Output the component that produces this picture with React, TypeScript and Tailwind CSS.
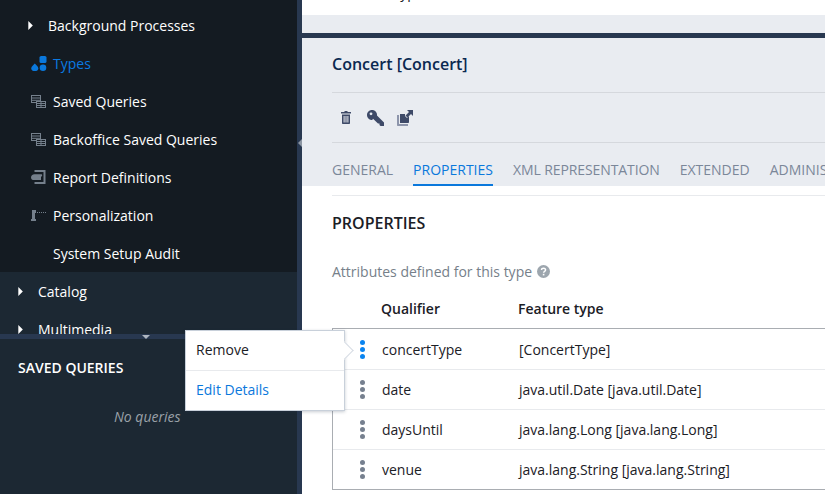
import React from "react";

const font = { fontFamily: '"Open Sans", sans-serif' };

function Caret({ className = "" }: { className?: string }) {
  return (
    <svg width="5" height="9" viewBox="0 0 5 9" className={className}>
      <path d="M0.3 0L4.8 4.5L0.3 9Z" fill="#ffffff" />
    </svg>
  );
}

function TypesIcon() {
  return (
    <svg width="16" height="15" viewBox="0 0 16 15">
      <rect x="8.5" y="0" width="7" height="7" rx="1.6" fill="#0a78dc" />
      <path d="M3.8 7.5C4.8 9 7.4 10.4 7.4 12.4C7.4 14 5.8 15 3.8 15C1.8 15 0.2 14 0.2 12.4C0.2 10.4 2.8 9 3.8 7.5Z" fill="#0a78dc" />
      <circle cx="12" cy="11.7" r="3.3" fill="#0a78dc" />
    </svg>
  );
}

function QueryIcon() {
  return (
    <svg width="15" height="13" viewBox="0 0 15 13" fill="none" stroke="#75808c" strokeWidth="1">
      <rect x="0.5" y="0.5" width="9" height="7" />
      <path d="M0.5 3H9.5M0.5 5.3H9.5" />
      <rect x="5.5" y="6.5" width="9" height="6" fill="#141b22" />
      <path d="M5.5 8.5H14.5M5.5 10.5H14.5M10 6.5V12.5" />
    </svg>
  );
}

function ReportIcon() {
  return (
    <svg width="15" height="14" viewBox="0 0 15 14">
      <path d="M3.5 0H14.5V14H3.5V12H12.5V2H3.5Z" fill="#75808c" />
      <path d="M3.5 4.2H10.5C11.4 4.2 11.4 6.6 10.5 6.6H10V10H3.5C1 10 0 9 0 7.4C0 5.6 1.4 4.2 3.5 4.2Z" fill="#75808c" />
    </svg>
  );
}

function PersonalizationIcon() {
  return (
    <svg width="15" height="11" viewBox="0 0 15 11">
      <path d="M1 0H5V3H4V9H5V11H0V9H1Z" fill="#75808c" />
      <path d="M6 2.5H15" stroke="#75808c" strokeWidth="1" strokeDasharray="1 1" />
    </svg>
  );
}

function NavRow({ icon, label, active }: { icon?: React.ReactNode; label: string; active?: boolean }) {
  return (
    <div className="flex h-[38px] items-center pl-[31px]">
      <div className="flex w-[22px] shrink-0 items-center">{icon}</div>
      <span className={active ? "text-[14px] font-medium text-[#0a7ae2]" : "text-[14px] font-medium text-white"}>
        {label}
      </span>
    </div>
  );
}

function TreeRow({ label }: { label: string }) {
  return (
    <div className="flex h-[38px] shrink-0 items-center pl-[18px]">
      <Caret />
      <span className="pl-[15px] text-[14px] font-medium text-white">{label}</span>
    </div>
  );
}

function Sidebar() {
  return (
    <div className="relative flex w-[302px] shrink-0 flex-col border-r-[5px] border-[#283850] bg-[#1c2833]">
      <div className="h-[334px] shrink-0 overflow-hidden">
        <div className="h-[272px] bg-[#141b22] pt-[6px]">
          <div className="flex h-[38px] items-center pl-[28px]">
            <Caret />
            <span className="pl-[15px] text-[14px] font-medium text-white">Background Processes</span>
          </div>
          <NavRow icon={<TypesIcon />} label="Types" active />
          <NavRow icon={<QueryIcon />} label="Saved Queries" />
          <NavRow icon={<QueryIcon />} label="Backoffice Saved Queries" />
          <NavRow icon={<ReportIcon />} label="Report Definitions" />
          <NavRow icon={<PersonalizationIcon />} label="Personalization" />
          <NavRow label="System Setup Audit" />
        </div>
        <div>
          <TreeRow label="Catalog" />
          <TreeRow label="Multimedia" />
        </div>
      </div>
      <div className="relative h-[5px] shrink-0 bg-[#283850]">
        <div className="absolute left-[142px] top-[1px] h-0 w-0 border-x-[4px] border-t-[4px] border-x-transparent border-t-[#aeb6c0]" />
      </div>
      <div className="pl-[18px] pt-[18px] text-[14px] font-semibold text-white">SAVED QUERIES</div>
      <div className="mt-[28px] pl-[114px] text-[14px] italic text-[#9aa1a8]">No queries</div>
      <div className="absolute right-[-5px] top-[139px] h-0 w-0 border-y-[4px] border-r-[4px] border-y-transparent border-r-[#8c96a3]" />
    </div>
  );
}

function MoreDots({ active }: { active?: boolean }) {
  const c = active ? "bg-[#0a84f0]" : "bg-[#76808f]";
  return (
    <div className="flex w-[49px] shrink-0 flex-col items-center gap-[2px] pl-[10px]">
      <span className={`h-[5px] w-[5px] rounded-full ${c}`} />
      <span className={`h-[5px] w-[5px] rounded-full ${c}`} />
      <span className={`h-[5px] w-[5px] rounded-full ${c}`} />
    </div>
  );
}

function PropRow({ q, t, active, last }: { q: string; t: string; active?: boolean; last?: boolean }) {
  const cls = last
    ? "flex h-[39px] items-center"
    : active
      ? "flex h-[41px] items-center border-b border-[#e8eaed]"
      : "flex h-[40px] items-center border-b border-[#e8eaed]";
  return (
    <div className={cls}>
      <MoreDots active={active} />
      <div className="w-[137px] shrink-0 text-[14px] text-[#1b2026]">{q}</div>
      <div className="text-[14px] text-[#1b2026]">{t}</div>
    </div>
  );
}

function ActionIcons() {
  return (
    <div className="flex h-[50px] items-center border-b border-[#d5d8dd]">
      <svg width="10" height="13" viewBox="0 0 10 13" className="ml-[9px]">
        <path d="M3.5 0H6.5V1H10V2.5H0V1H3.5Z M1 3.5H9V12C9 12.6 8.6 13 8 13H2C1.4 13 1 12.6 1 12Z M2.6 5V11.5H3.6V5Z M4.5 5V11.5H5.5V5Z M6.4 5V11.5H7.4V5Z" fill="#3e4a68" fillRule="evenodd" />
      </svg>
      <svg width="17" height="16" viewBox="0 0 17 16" className="ml-[16px]">
        <path d="M5 0C8 0 10 2.2 10 4.8L10 5.5L17 12.5V16H13.5L12.5 15V13.5H11L6 8.7C5.6 9.5 5.3 10 5 10C2.2 10 0 7.8 0 5C0 2.2 2.2 0 5 0Z" fill="#3e4a68" />
        <circle cx="4" cy="3.8" r="1.4" fill="#e9ecf1" />
      </svg>
      <svg width="16" height="16" viewBox="0 0 16 16" className="ml-[13px]">
        <path d="M0 5H2V14H11V16H1C0.4 16 0 15.6 0 15Z" fill="#8d95ab" />
        <path d="M3 4H8V6L10 8L12 6V12C12 12.6 11.6 13 11 13H3Z" fill="#3e4a68" />
        <path d="M10 0H16V6L14 4L10.5 7.5L8.5 5.5L12 2Z" fill="#3e4a68" />
      </svg>
    </div>
  );
}

function Tabs() {
  return (
    <div className="flex h-[43px] gap-[20px] whitespace-nowrap text-[14px]">
      <div className="flex h-[43px] items-center border-b-[2px] border-transparent pt-[11px] text-[#7b8799]">GENERAL</div>
      <div className="flex h-[43px] items-center border-b-[2px] border-[#0a78dc] pt-[11px] text-[#0a78dc]">PROPERTIES</div>
      <div className="flex h-[43px] items-center border-b-[2px] border-transparent pt-[11px] tracking-[-0.1px] text-[#7b8799]">XML REPRESENTATION</div>
      <div className="flex h-[43px] items-center border-b-[2px] border-transparent pt-[11px] text-[#7b8799]">EXTENDED</div>
      <div className="flex h-[43px] items-center border-b-[2px] border-transparent pt-[11px] text-[#7b8799]">ADMINISTRATION</div>
    </div>
  );
}

function Popup() {
  return (
    <div className="absolute left-[185px] top-[330px] z-10 w-[160px] border border-[#c8d0da] bg-white shadow-[0_1px_3px_rgba(40,56,80,0.25)]">
      <div className="flex h-[40px] items-center border-b border-[#e8eaed] pb-[2px] pl-[10px] text-[14px] text-[#1b2026]">Remove</div>
      <div className="flex h-[39px] items-center pb-[2px] pl-[10px] text-[14px] text-[#0a78dc]">Edit Details</div>
      <div className="absolute right-[-7px] top-[13px] h-[13px] w-[13px] rotate-45 border-r border-t border-[#d5dbe3] bg-white" />
    </div>
  );
}

export default function App() {
  return (
    <div className="relative flex h-[494px] w-[825px] overflow-hidden bg-white" style={font}>
      <Sidebar />
      <div className="min-w-0 flex-1">
        <div className="h-[15px] overflow-hidden bg-white">
          <div className="-mt-[17px] pl-[60px] text-[14px] leading-[20px] text-[#1b2026]">Metatype</div>
        </div>
        <div className="h-[18px] bg-[#e9ecf1]" />
        <div className="h-[5px] bg-[#283850]" />
        <div className="h-[148px] bg-[#e9ecf1] pl-[30px]">
          <div className="flex h-[55px] items-center border-b border-[#d5d8dd] pb-[2px] text-[16px] font-semibold text-[#0a2850]">
            Concert [Concert]
          </div>
          <ActionIcons />
          <Tabs />
        </div>
        <div className="ml-[30px] mt-[9px] border-t border-[#e8eaed] pt-[16px] text-[16px] font-semibold leading-[22px] text-[#1b2026]">
          PROPERTIES
        </div>
        <div className="ml-[30px] mt-[27px] flex h-[20px] items-center gap-[5px] text-[14px] text-[#76808a]">
          Attributes defined for this type
          <svg width="13" height="13" viewBox="0 0 13 13">
            <circle cx="6.5" cy="6.5" r="6.5" fill="#9da6ae" />
            <path d="M4.5 5C4.5 3.8 5.4 3.2 6.5 3.2C7.7 3.2 8.6 3.9 8.6 5C8.6 6.4 6.6 6.4 6.6 7.8" fill="none" stroke="#ffffff" strokeWidth="1.4" />
            <rect x="5.8" y="8.8" width="1.6" height="1.6" fill="#ffffff" />
          </svg>
        </div>
        <div className="ml-[30px] flex h-[47px] items-center pt-[7px] text-[14px] font-semibold text-[#1b2026]">
          <div className="w-[49px] shrink-0" />
          <div className="w-[137px] shrink-0">Qualifier</div>
          <div>Feature type</div>
        </div>
        <div className="ml-[30px] w-[520px] border border-[#a9adb2]">
          <PropRow q="concertType" t="[ConcertType]" active />
          <PropRow q="date" t="java.util.Date [java.util.Date]" />
          <PropRow q="daysUntil" t="java.lang.Long [java.lang.Long]" />
          <PropRow q="venue" t="java.lang.String [java.lang.String]" last />
        </div>
      </div>
      <Popup />
    </div>
  );
}
